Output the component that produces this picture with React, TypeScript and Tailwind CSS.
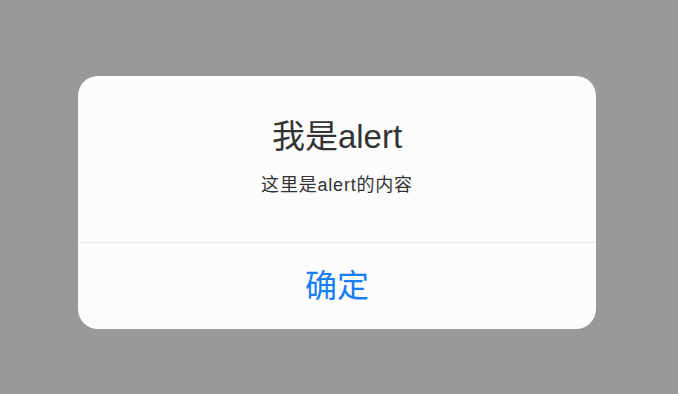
const App = () => {
  return (
    <div
      className="w-[678px] h-[394px] bg-[#999999] pt-[76px] pl-[78px]"
      style={{ fontFamily: '"Liberation Sans", "Noto Sans CJK SC", sans-serif' }}
    >
      <div className="w-[518px] h-[253px] bg-[#fcfcfc] rounded-[20px] flex flex-col overflow-hidden">
        {/* Body */}
        <div className="flex flex-col items-center pt-[41px] h-[167px] border-b border-[#e8e8e8]">
          <h2 className="text-[33px] leading-[40px] text-[#333333]">我是alert</h2>
          <p className="mt-[16px] text-[18px] leading-[24px] tracking-[0.8px] text-[#333333]">
            这里是alert的内容
          </p>
        </div>

        {/* Action */}
        <button className="flex-1 flex items-center justify-center text-[32px] text-[#1a7ef2]">
          确定
        </button>
      </div>
    </div>
  );
};

export default App;
